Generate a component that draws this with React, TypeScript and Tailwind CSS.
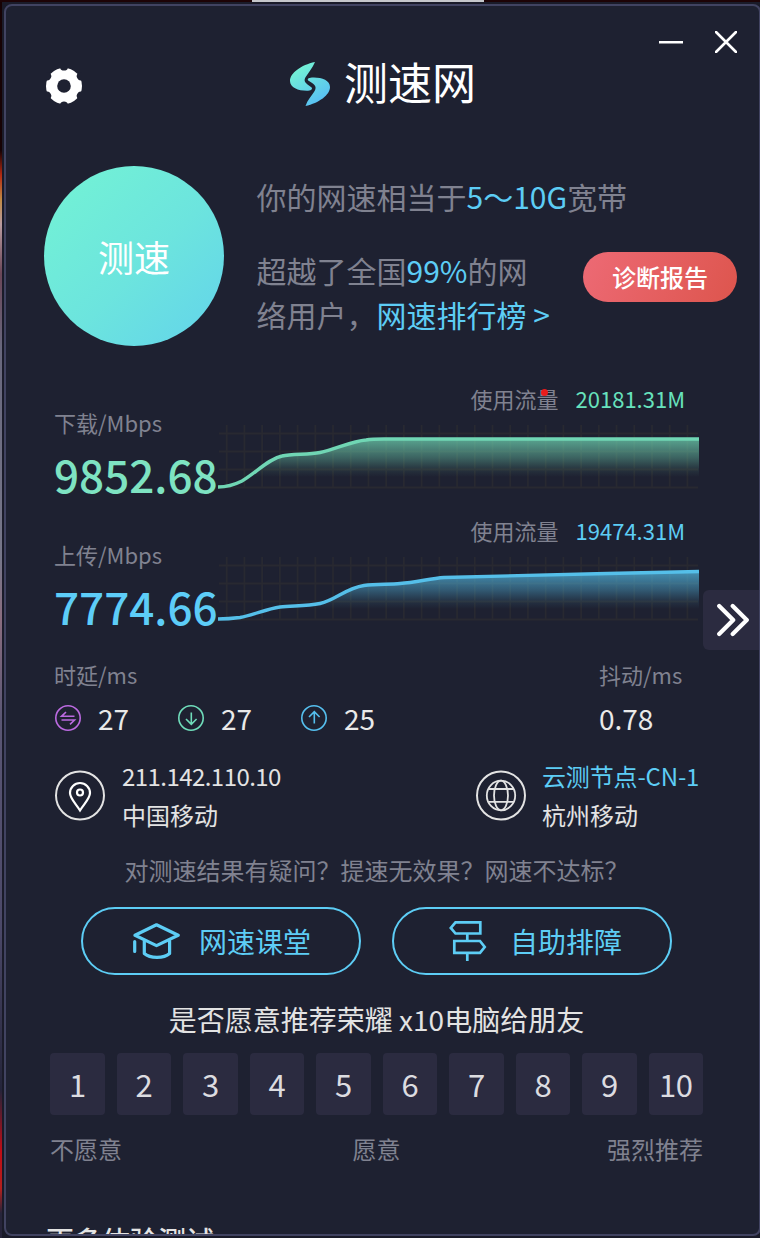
import * as React from "react";

const SCORES = [1, 2, 3, 4, 5, 6, 7, 8, 9, 10];

const DOWNLOAD_LINE =
  "M0 64 C10 64 16 62 24 58 C38 50 50 36 64 33 C74 30.5 90 32 102 29.5 C118 26 134 18 148 17 C154 16 160 16 166 16 H481";
const UPLOAD_LINE =
  "M0 64 C8 64 14 63.5 22 62.5 C36 60 48 54 62 52 C74 50.5 88 51.5 102 48.5 C118 45 128 33 146 30.5 C158 29 172 29.5 182 28.5 C198 27.5 212 23.5 226 22.5 C290 21 400 18 481 16.5";

interface SpeedRowProps {
  id: string;
  label: string;
  value: string;
  traffic: string;
  line: string;
  color: string;
  valueClass: string;
  trafficClass: string;
  marker?: boolean;
}

function Gear() {
  return (
    <svg className="mt-1 w-9 h-9" viewBox="0 0 36 36">
      <circle cx="18" cy="18" r="18" fill="#fff" />
      {[0, 60, 120, 180, 240, 300].map((a) => (
        <circle key={a} cx="18" cy="-1.4" r="4" fill="#1e2131" transform={`rotate(${a} 18 18)`} />
      ))}
      <circle cx="18" cy="18" r="6.8" fill="#1e2131" />
    </svg>
  );
}

function Logo() {
  return (
    <div className="flex items-center">
      <svg className="w-10 h-11" viewBox="0 0 40 44">
        <defs>
          <linearGradient id="logo" x1="8" y1="6" x2="30" y2="40" gradientUnits="userSpaceOnUse">
            <stop offset="0" stopColor="#73f1d5" />
            <stop offset="1" stopColor="#58c0f4" />
          </linearGradient>
        </defs>
        <g fill="url(#logo)">
          <path d="M25 0 C11 3 0 11 0 19 C0 26 9 29 18 28.7 C22 28.4 23 26.5 21 25 C15 21 13 19 16 14.5 C18.5 10.5 22.5 6 25 0Z" />
          <path d="M15.5 44 C29 41 40 33 40 25 C40 18 31 15 22 15.5 C18 15.8 16.5 17.5 19 19 C26 23 27 25.5 24 30 C21.5 34 17.5 38 15.5 44Z" />
        </g>
      </svg>
      <span className="ml-[14px] -mt-[6px] text-[44px] leading-[44px] text-white">测速网</span>
    </div>
  );
}

function SpeedRow({ id, label, value, traffic, line, color, valueClass, trafficClass, marker }: SpeedRowProps) {
  return (
    <div className="flex h-[132px]">
      <div className="w-[164px] pt-[22px] whitespace-nowrap">
        <div className="text-[22px] leading-8 text-[#808290]">{label}</div>
        <div className={`mt-2 text-[44px] leading-[56px] font-medium ${valueClass}`}>{value}</div>
      </div>
      <div className="w-[481px]">
        <div className="flex justify-end pr-[14px] text-[22px] leading-7">
          <span className="relative text-[#808290]">
            使用流量
            {marker && <i className="absolute right-[11px] top-[5px] w-[7px] h-[7px] rounded-full bg-[#e91c1c]" />}
          </span>
          <span className={`ml-[17px] ${trafficClass}`}>{traffic}</span>
        </div>
        <svg className="mt-[11px] w-[481px] h-[68px]" viewBox="0 0 481 68">
          <defs>
            <linearGradient id={id} x1="0" y1="16" x2="0" y2="54" gradientUnits="userSpaceOnUse">
              <stop offset="0" stopColor={color} stopOpacity="0.72" />
              <stop offset="0.5" stopColor={color} stopOpacity="0.36" />
              <stop offset="0.8" stopColor={color} stopOpacity="0.1" />
              <stop offset="1" stopColor={color} stopOpacity="0" />
            </linearGradient>
          </defs>
          <g stroke="#282931" strokeWidth="1.8">
            {Array.from({ length: 27 }, (_, i) => (
              <path key={i} d={`M${8.7 + i * 17.72} 2 V64`} />
            ))}
            {[10.5, 28.5, 46.5, 64.5].map((y) => (
              <path key={y} d={`M1 ${y} H480`} />
            ))}
          </g>
          <path d={`${line} V64 H0Z`} fill={`url(#${id})`} />
          <path d={line} fill="none" stroke={color} strokeWidth="3.4" />
        </svg>
      </div>
    </div>
  );
}

function Latency({ children, value, color }: { children: React.ReactNode; value: string; color: string }) {
  return (
    <div className="flex items-center w-[123px]">
      <svg className="w-[26px] h-[26px]" viewBox="0 0 26 26" fill="none" stroke={color} strokeWidth="1.6">
        <circle cx="13" cy="13" r="12.2" />
        {children}
      </svg>
      <span className="ml-[17px] text-[28px] leading-8 text-[#e9e9e9]">{value}</span>
    </div>
  );
}

export default function App() {
  return (
    <div
      className="w-[760px] h-[1238px] overflow-hidden bg-[#1a1b29] text-[#e3e3e3]"
      style={{ fontFamily: '"Noto Sans CJK SC", sans-serif' }}
    >
      <div className="h-[2px] bg-[#1d0306] pl-[252px]">
        <div className="h-full w-[232px] bg-[#c6c7cb]" />
      </div>
      <div className="flex h-[1236px]">
        {/* desktop showing past the window edge */}
        <div className="w-[2px] shrink-0 bg-[linear-gradient(180deg,#160204_0%,#160204_12%,#b32a12_14%,#c28a45_16%,#b99ba0_18%,#6a4658_22%,#68677d_28%,#77778a_45%,#8a6d80_50%,#5a5674_58%,#4b4868_75%,#24243a_88%,#c00d16_93%,#b3201e_96%,#26243a_98%)]" />
        <div className="relative mt-[2px] ml-[2px] w-[757px] h-[1232px] shrink-0 overflow-hidden rounded-lg border-2 border-[#414361] bg-[#1e2131]">
          <div className="flex justify-end gap-8 h-14 pt-[25px] pr-[22px]">
            <svg className="w-6 h-[22px]" viewBox="0 0 24 22" stroke="#fff" strokeWidth="2.4">
              <path d="M0 11.2 H24" />
            </svg>
            <svg className="w-[22px] h-[22px]" viewBox="0 0 22 22" stroke="#fff" strokeWidth="2.6" strokeLinecap="round">
              <path d="M1 1 L21 21 M21 1 L1 21" />
            </svg>
          </div>
          <div className="flex items-center h-11 pl-10">
            <Gear />
            <div className="ml-52">
              <Logo />
            </div>
          </div>

          <div className="flex mt-[60px] pl-[38px] h-[180px]">
            <button className="w-[180px] h-[180px] rounded-full bg-[linear-gradient(135deg,#72f0d6_12%,#6ce4de_55%,#64d6e9_92%)] text-[36px] text-white">
              测速
            </button>
            <div className="ml-[32.5px] pt-2 w-[326.5px] text-[30px] leading-[44px] whitespace-nowrap text-[#808290]">
              <p>
                你的网速相当于<span className="text-[#5dcdf5]">5～10G</span>宽带
              </p>
              <p className="mt-[30px]">
                超越了全国<span className="text-[#5dcdf5]">99%</span>的网
              </p>
              <p>
                络用户，<span className="text-[#5dcdf5]">网速排行榜 &gt;</span>
              </p>
            </div>
            <button className="mt-[86px] w-[154px] h-[50px] rounded-full bg-[linear-gradient(115deg,#ed6a75,#dd554d)] text-[24px] font-medium text-white">
              诊断报告
            </button>
          </div>

          <div className="mt-[38px] pl-[48px]">
            <SpeedRow
              id="down"
              label="下载/Mbps"
              value="9852.68"
              traffic="20181.31M"
              line={DOWNLOAD_LINE}
              color="#70d6b4"
              valueClass="text-[#7ee3c2]"
              trafficClass="text-[#67e2bd]"
              marker
            />
            <SpeedRow
              id="up"
              label="上传/Mbps"
              value="7774.66"
              traffic="19474.31M"
              line={UPLOAD_LINE}
              color="#55bfe9"
              valueClass="text-[#5dcdf8]"
              trafficClass="text-[#5dcdf5]"
            />
          </div>

          <div className="mt-[10px] flex pl-[48px]">
            <div className="w-[545px]">
              <div className="text-[22px] leading-8 text-[#808290]">时延/ms</div>
              <div className="mt-3 ml-px flex">
                <Latency value="27" color="#bb6ae0">
                  <path d="M19.5 11.3 H6.5 L11 7 M6.5 15 H19.5 L15 19.3" />
                </Latency>
                <Latency value="27" color="#6fdcba">
                  <path d="M13.3 7.5 V19 M8 14 L13.3 19.3 L18.6 14" />
                </Latency>
                <Latency value="25" color="#55bfee">
                  <path d="M13.3 18.5 V7 M8 12 L13.3 6.7 L18.6 12" />
                </Latency>
              </div>
            </div>
            <div>
              <div className="text-[22px] leading-8 text-[#808290]">抖动/ms</div>
              <div className="mt-3 text-[28px] leading-8 text-[#e9e9e9]">0.78</div>
            </div>
          </div>

          <div className="mt-[22px] flex pl-[49px] text-[24px] leading-[39px]">
            <div className="flex items-center w-[421px]">
              <svg className="w-[50px] h-[51px]" viewBox="0 0 50 51" fill="none" stroke="#e3e3e3" strokeWidth="2">
                <circle cx="25" cy="25.5" r="24" />
                <g stroke="#fff" strokeWidth="2.2">
                  <path d="M25 40.5 C21 34 15 28.5 15 23 A10 10 0 0 1 35 23 C35 28.5 29 34 25 40.5Z" />
                  <circle cx="25" cy="22.5" r="3" />
                </g>
              </svg>
              <div className="ml-[17px]">
                <div className="tracking-[-0.55px]">211.142.110.10</div>
                <div>中国移动</div>
              </div>
            </div>
            <div className="flex items-center">
              <svg className="w-[50px] h-[51px]" viewBox="0 0 50 51" fill="none" stroke="#e3e3e3" strokeWidth="1.8">
                <circle cx="25" cy="25.5" r="24" strokeWidth="2" />
                <ellipse cx="25" cy="25.5" rx="14.2" ry="14.8" />
                <ellipse cx="25" cy="25.5" rx="7" ry="14.8" />
                <path d="M12.5 19 H37.5 M12.5 31.8 H37.5" />
              </svg>
              <div className="ml-4">
                <div className="tracking-[-0.15px] text-[#5dcdf5]">云测节点-CN-1</div>
                <div>杭州移动</div>
              </div>
            </div>
          </div>

          <div className="w-[653px] ml-11 mt-5">
            <p className="text-center text-[24px] leading-8 text-[#808290]">对测速结果有疑问？提速无效果？网速不达标？</p>
            <div className="mt-[21px] flex justify-center gap-[31px] text-[28px] text-[#5dcdf5]">
              <button className="flex items-center w-[280px] h-[68px] pl-[50px] rounded-full border-2 border-[#5dcdf5]">
                <svg className="w-[48px] h-[38px]" viewBox="0 0 48 38" fill="none" stroke="currentColor" strokeWidth="3.2" strokeLinejoin="round" strokeLinecap="round">
                  <path d="M2 13.3 L23.5 2.8 L45.2 13.3 L23.5 23.6Z" />
                  <path d="M11.3 19 V31.5 C17 36.6 31 36.6 36.6 31.5 V19 M1.7 19.5 V29.5" />
                </svg>
                <span className="ml-[18px]">网速课堂</span>
              </button>
              <button className="flex items-center w-[280px] h-[68px] pl-[54px] rounded-full border-2 border-[#5dcdf5]">
                <svg className="w-[40px] h-[42px]" viewBox="0 0 40 42" fill="none" stroke="currentColor" strokeWidth="2.7">
                  <path d="M7.5 2.3 H32.3 V13.5 H7.5 L2.8 7.9Z M6.3 21 H32 L36.7 27 L32 32.8 H6.3Z M19.3 13.5 V21 M19.3 32.8 V41" />
                </svg>
                <span className="ml-[22px]">自助排障</span>
              </button>
            </div>
            <p className="mt-6 text-center text-[28px] leading-10">是否愿意推荐荣耀 x10电脑给朋友</p>
            <div className="mt-[14px] grid grid-cols-10 gap-3">
              {SCORES.map((n) => (
                <button key={n} className="h-[62px] rounded bg-[#2b2b40] text-[31px] tracking-[-0.5px] text-[#dcdce0]">
                  {n}
                </button>
              ))}
            </div>
            <div className="mt-[18px] flex justify-between text-[24px] leading-8 text-[#808290]">
              <span>不愿意</span>
              <span className="pl-6">愿意</span>
              <span>强烈推荐</span>
            </div>
          </div>
          <h2 className="ml-10 mt-[55px] text-[28px] leading-10 font-medium">更多体验测试</h2>

          <button className="absolute right-0 top-[584px] flex items-center justify-center w-[56px] h-[60px] pl-1 rounded-l-md bg-[#2b2b40]">
            <svg className="w-8 h-[34px]" viewBox="0 0 32 34" fill="none" stroke="#fff" strokeWidth="4.2" strokeLinecap="round" strokeLinejoin="round">
              <path d="M2.2 3 L16.2 17 L2.2 31 M15.7 3 L29.8 17 L15.7 31" />
            </svg>
          </button>
        </div>
      </div>
    </div>
  );
}
